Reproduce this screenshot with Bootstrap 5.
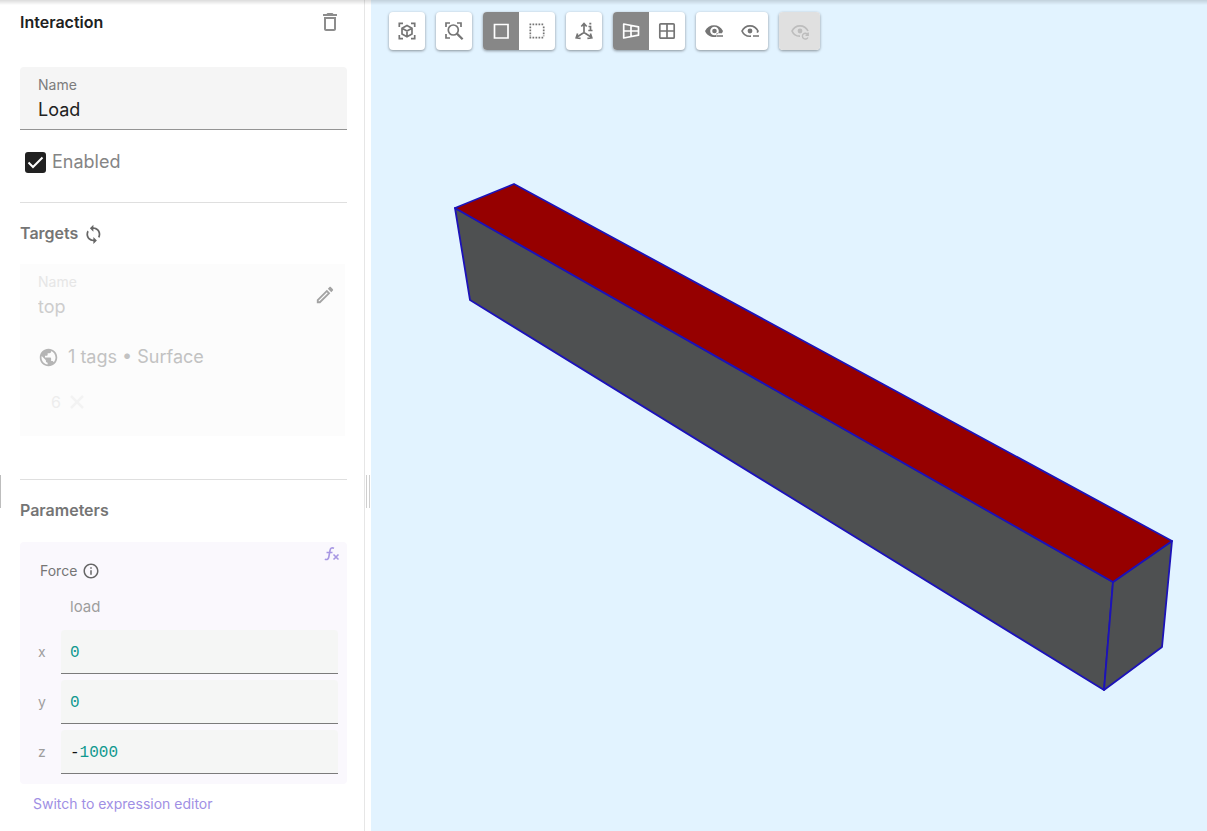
<!DOCTYPE html>
<html lang="en">
<head>
<meta charset="utf-8">
<meta name="viewport" content="width=device-width, initial-scale=1">
<title>Interaction</title>
<link href="https://cdn.jsdelivr.net/npm/bootstrap@5.3.0/dist/css/bootstrap.min.css" rel="stylesheet">
<style>
  body { font-family: Inter, "Liberation Sans", sans-serif; font-size: 14px; line-height: 24px; color: #757575; background: #fff; }
  svg { display: block; flex: none; }
  .app-shadow { position: fixed; inset: 0 0 auto 0; height: 5px; background: linear-gradient(rgba(0,0,0,.14), rgba(0,0,0,0)); z-index: 5; pointer-events: none; }
  .side { width: 365px; flex: none; padding: 10px 17px 12px 20px; border-right: 1px solid #e6e6e6; position: relative; }
  .side-handle { position: absolute; left: 0; top: calc(50vh + 59px); height: 33px; border-left: 1px solid #bdbdbd; }
  .splitter { width: 6px; flex: none; background: #fff; padding: 0 1px; }
  .grip { width: 4px; height: 33px; border: solid #cfcfcf; border-width: 0 1px; margin-top: 151px; }
  .sec-title { font-size: 16px; line-height: 24px; font-weight: 600; margin: 0; color: #757575; }
  .sec-title.main { color: #212121; }
  .rule { height: 1px; background: #dfdfdf; margin: 28px 0 18px; border: 0; opacity: 1; }
  .rule-far { margin-top: 43px; }
  .plain { border: 0; background: none; padding: 0; color: inherit; }
  .field { background: #f5f5f5; border-bottom: 1px solid #949494; border-radius: 4px 4px 0 0; padding: 6px 18px 7px; margin: 33px 0 20px; height: 63px; }
  .field label, .target-card label { display: block; font-size: 14px; line-height: 24px; color: #7c7c7c; }
  .field input, .target-card input { display: block; width: 100%; border: 0; padding: 0; background: none; font-size: 18px; line-height: 24px; height: 25px; color: #212121; }
  .check-row { padding-left: 5px; gap: 6px; font-size: 18px; color: #858585; }
  .check-row .form-check-input { width: 21px; height: 21px; margin: 0; border-radius: 3px; border: 0; float: none; }
  .check-row .form-check-input:checked { background-color: #212121; background-size: 21px 21px; background-image: url("data:image/svg+xml,%3Csvg xmlns='http://www.w3.org/2000/svg' viewBox='0 0 21 21'%3E%3Cpath fill='none' stroke='%23fff' stroke-width='2' d='M3.500 10.500l4.500 4.500L17.500 5.500'/%3E%3C/svg%3E"); }
  .target-card { background: #fcfcfc; height: 172px; margin: 19px 2px 0 0; padding: 6px 10px 0 18px; }
  .target-card label { color: #e6e6e6; }
  .target-card input { color: #cdcdcd; }
  .tags { font-size: 18px; color: #c2c2c2; gap: 9px; margin-top: 26px; }
  .chip { font-size: 16px; color: #ededed; gap: 9px; padding-left: 13px; margin-top: 21px; }
  .param-card { background: #faf8fd; border-radius: 4px; margin-top: 20px; padding: 17px 9px 10px 20px; position: relative; }
  .fx { position: absolute; right: 7px; top: 4px; color: #a797e3; }
  .force { gap: 5px; }
  .param-name { color: #9e9e9e; font-size: 15px; padding-left: 30px; margin: 12px 0 11px; }
  .axes { gap: 6px; }
  .axes label { width: 41px; color: #9e9e9e; padding-left: 18px; margin-left: -20px; }
  .num { background: #f5f6f5; border-bottom: 1px solid #7b7b7b; height: 44px; padding: 2px 9px 0; border-radius: 4px 4px 0 0; font: 16px/24px "Liberation Mono", monospace; color: #111; }
  .num input { border: 0; background: none; padding: 0; width: 100%; min-width: 0; color: #10998f; }
  .switch-link { color: #a08fe4; text-decoration: none; margin: 8px 0 0 13px; display: inline-block; }
  .view { background: #e2f3ff; position: relative; min-width: 0; }
  .scene { width: 100%; aspect-ratio: 836 / 831; }
  .tools { position: absolute; left: 18px; top: 12px; gap: 11px; color: #757575; }
  .tool-set { display: flex; border-radius: 4px; background: #fff; box-shadow: 0 1px 3px rgba(0,0,0,.4); overflow: hidden; }
  .tool { width: 36px; height: 38px; border: 0; padding: 0; background: none; color: #757575; display: flex; align-items: center; justify-content: center; }
  .tool.on { background: #878787; color: #fff; }
  .tool:disabled { background: #e0e0e0; color: #bdbdbd; width: 41px; }
  .tool svg { width: 20px; height: 20px; fill: none; stroke: currentColor; stroke-width: 1.7; }
</style>
</head>
<body>
<div class="app-shadow"></div>
<div class="d-flex min-vh-100">
  <aside class="side">
    <div class="side-handle"></div>
    <div class="d-flex justify-content-between align-items-center">
      <h1 class="sec-title main">Interaction</h1>
      <button class="plain me-1" type="button" aria-label="Delete"><svg width="26" height="24" viewBox="-1 0 26 24" fill="#8d8d8d"><path d="M6 19c0 1.1.9 2 2 2h8c1.1 0 2-.9 2-2V7H6v12zM8 9h8v10H8V9zm7.500-5-1-1h-5l-1 1H5v2h14V4h-3.500z"/></svg></button>
    </div>
    <div class="field">
      <label for="name">Name</label>
      <input id="name" type="text" value="Load">
    </div>
    <div class="check-row d-flex align-items-center">
      <input class="form-check-input" type="checkbox" id="enabled" checked>
      <label for="enabled">Enabled</label>
    </div>
    <hr class="rule">
    <div class="d-flex align-items-center gap-1">
      <h2 class="sec-title">Targets</h2>
      <button class="plain" type="button" aria-label="Refresh targets"><svg width="21" height="22" viewBox="-1 -2 24 25" fill="#666"><path d="M12 4V1L8 5l4 4V6c3.310 0 6 2.690 6 6 0 1.010-.25 1.970-.7 2.800l1.460 1.460C19.540 15.030 20 13.570 20 12c0-4.420-3.580-8-8-8zm0 14c-3.310 0-6-2.690-6-6 0-1.010.25-1.970.7-2.800L5.240 7.740C4.460 8.970 4 10.430 4 12c0 4.420 3.580 8 8 8v3l4-4-4-4v3z"/></svg></button>
    </div>
    <div class="target-card">
      <div class="d-flex align-items-center">
        <div class="flex-grow-1">
          <label for="target">Name</label>
          <input id="target" type="text" value="top">
        </div>
        <button class="plain" type="button" aria-label="Edit"><svg width="20" height="20" viewBox="1 1 22 22" fill="#a3a3a3"><path d="M14.060 9.020l.92.92L5.920 19H5v-.92l9.060-9.060M17.660 3c-.25 0-.51.1-.7.29l-1.830 1.830 3.750 3.750 1.830-1.830c.39-.39.39-1.020 0-1.410l-2.340-2.340c-.2-.2-.45-.29-.71-.29zm-3.600 3.190L3 17.250V21h3.750L17.810 9.940l-3.750-3.750z"/></svg></button>
      </div>
      <div class="tags d-flex align-items-center">
        <svg width="21" height="21" viewBox="0 0 24 24" fill="#b5b5b5"><path d="M12 2C6.480 2 2 6.480 2 12s4.480 10 10 10 10-4.480 10-10S17.520 2 12 2zm-1 17.930c-3.950-.49-7-3.850-7-7.930 0-.62.08-1.210.21-1.790L9 15v1c0 1.100.9 2 2 2v1.930zm6.900-2.540c-.26-.81-1-1.390-1.900-1.390h-1v-3c0-.55-.45-1-1-1H8v-2h2c.55 0 1-.45 1-1V7h2c1.100 0 2-.9 2-2v-.41c2.930 1.190 5 4.060 5 7.410 0 2.080-.8 3.970-2.100 5.390z"/></svg>
        <span>1 tags • Surface</span>
      </div>
      <div class="chip d-flex align-items-center">
        <span>6</span>
        <button class="plain" type="button" aria-label="Remove 6"><svg width="14" height="14" viewBox="0 0 14 14" stroke="#f3f3f3" stroke-width="2.500"><path d="M1 1l12 12M13 1L1 13"/></svg></button>
      </div>
    </div>
    <hr class="rule rule-far">
    <h2 class="sec-title">Parameters</h2>
    <div class="param-card">
      <button class="plain fx" type="button" aria-label="Expression"><svg width="17" height="16" viewBox="0 0 17 16" fill="none" stroke="currentColor" stroke-width="1.600"><path d="M11 2.200C8.500 1.200 7.400 2.300 7 4.500L5.800 11C5.400 13.300 4.200 14 1.800 13.200M3.500 6.500h6M10.500 8.500l5 5M15.500 8.500l-5 5"/></svg></button>
      <div class="force d-flex align-items-center">
        <span>Force</span>
        <svg width="18" height="18" viewBox="0 0 24 24" fill="#666"><path d="M11 7h2v2h-2zm0 4h2v6h-2zm1-9C6.480 2 2 6.480 2 12s4.480 10 10 10 10-4.480 10-10S17.520 2 12 2zm0 18c-4.410 0-8-3.590-8-8s3.590-8 8-8 8 3.590 8 8-3.590 8-8 8z"/></svg>
      </div>
      <div class="param-name">load</div>
      <div class="axes d-flex flex-column">
        <div class="d-flex align-items-center"><label for="fx">x</label><div class="num flex-grow-1 d-flex align-items-center"><input id="fx" type="text" value="0"></div></div>
        <div class="d-flex align-items-center"><label for="fy">y</label><div class="num flex-grow-1 d-flex align-items-center"><input id="fy" type="text" value="0"></div></div>
        <div class="d-flex align-items-center"><label for="fz">z</label><div class="num flex-grow-1 d-flex align-items-center"><span>-</span><input id="fz" type="text" value="1000"></div></div>
      </div>
    </div>
    <a class="switch-link" href="#">Switch to expression editor</a>
  </aside>
  <div class="splitter d-flex align-items-center"><div class="grip"></div></div>
  <main class="view flex-grow-1">
    <svg class="scene" viewBox="0 0 836 831" role="img" aria-label="Beam model">
      <g stroke="#1c12b8" stroke-width="1.800" stroke-linejoin="round">
        <path fill="#4e5051" d="M84 208L742 582 733 690 99 300z"/>
        <path fill="#4e5051" d="M742 582L801 541 791 647 733 690z"/>
        <path fill="#960000" d="M84 208L143 184 801 541 742 582z"/>
      </g>
    </svg>
    <div class="tools d-flex" role="toolbar">
      <div class="tool-set"><button class="tool" type="button" aria-label="Fit model"><svg viewBox="0 0 20 20"><path d="M2.300 6V2.300H6M14 2.300h3.700V6M17.700 14v3.700H14M6 17.700H2.300V14M10 4.500l5 2.800v5.600l-5 2.800-5-2.800V7.300zM5 7.300l5 2.800 5-2.800M10 10.100v5.600"/></svg></button></div>
      <div class="tool-set"><button class="tool" type="button" aria-label="Zoom to area"><svg viewBox="0 0 20 20"><path d="M2 6V2h4M13 2h4v4M6 17H2v-4"/><circle cx="9.300" cy="9" r="5"/><path stroke-width="2.200" d="M12.900 12.600l5.700 5.700"/></svg></button></div>
      <div class="tool-set"><button class="tool on" type="button" aria-label="Solid selection"><svg viewBox="0 0 20 20"><path d="M3.500 3.500h13.500v13.500H3.500z"/></svg></button><button class="tool" type="button" aria-label="Box selection"><svg viewBox="0 0 20 20"><path stroke-dasharray="1.700 1.300" d="M2.500 3.300h15M2.500 16.700h15M3.300 5.500v9.700M16.700 5.500v9.700"/></svg></button></div>
      <div class="tool-set"><button class="tool" type="button" aria-label="Axes"><svg viewBox="0 0 20 20"><path d="M10 4v7.500L3 16M10 11.500l7 4.500M7.300 5.500L10 2.500l2.700 3M3.600 12.500L2.200 16.700l4.400.6M16.400 12.500l1.400 4.200-4.400.6M14.500 5.500h2v4M14.300 9.500H18.500M15.300 2.700h2"/></svg></button></div>
      <div class="tool-set"><button class="tool on" type="button" aria-label="Perspective"><svg viewBox="0 0 20 20"><path stroke-linejoin="round" d="M2.700 3L17.500 5.800v8.400L2.700 17zM2.700 10h14.800M10 4.400v11.200"/></svg></button><button class="tool" type="button" aria-label="Orthographic"><svg viewBox="0 0 20 20"><rect x="2.800" y="2.800" width="14.400" height="14.400" rx="1"/><path d="M10 3v14M3 10h14"/></svg></button></div>
      <div class="tool-set"><button class="tool" type="button" aria-label="Hide selected"><svg viewBox="0 0 20 20"><path fill="currentColor" stroke="none" fill-rule="evenodd" d="M1 10C3 6 6 4.200 10 4.200S17 6 19 10l-1 2.200h-5.500V16C7 16.600 3 14.500 1 10zM10.500 5.700a4.300 4.300 0 1 0 0 8.600 4.300 4.300 0 0 0 0-8.600z"/><circle cx="10.500" cy="10" r="2.300" fill="currentColor" stroke="none"/><path stroke-width="1.500" d="M13 15h6"/></svg></button><button class="tool" type="button" aria-label="Hide others"><svg viewBox="0 0 20 20"><path d="M11 15.200C7 15.600 3.500 13.500 2 10c1.700-3.500 4.600-5.200 8-5.200s6.300 1.700 8 5.200l-.8 1.600"/><circle cx="10" cy="10" r="2.400" fill="currentColor" stroke="none"/><path d="M13 15h6"/></svg></button></div>
      <div class="tool-set"><button class="tool" type="button" disabled aria-label="Reset visibility"><svg viewBox="0 0 20 20"><path d="M10 15.200C6.500 15.300 3.500 13.500 2 10c1.700-3.500 4.600-5.200 8-5.200s6.300 1.700 8 5.200"/><circle cx="10" cy="10" r="2.400" fill="currentColor" stroke="none"/><path stroke-width="1.400" d="M17.700 13.500a2.900 2.900 0 1 0 .2 3M18.200 11.500v2.700h-2.700"/></svg></button></div>
    </div>
  </main>
</div>
<script src="https://cdn.jsdelivr.net/npm/bootstrap@5.3.0/dist/js/bootstrap.bundle.min.js"></script>
</body>
</html>
